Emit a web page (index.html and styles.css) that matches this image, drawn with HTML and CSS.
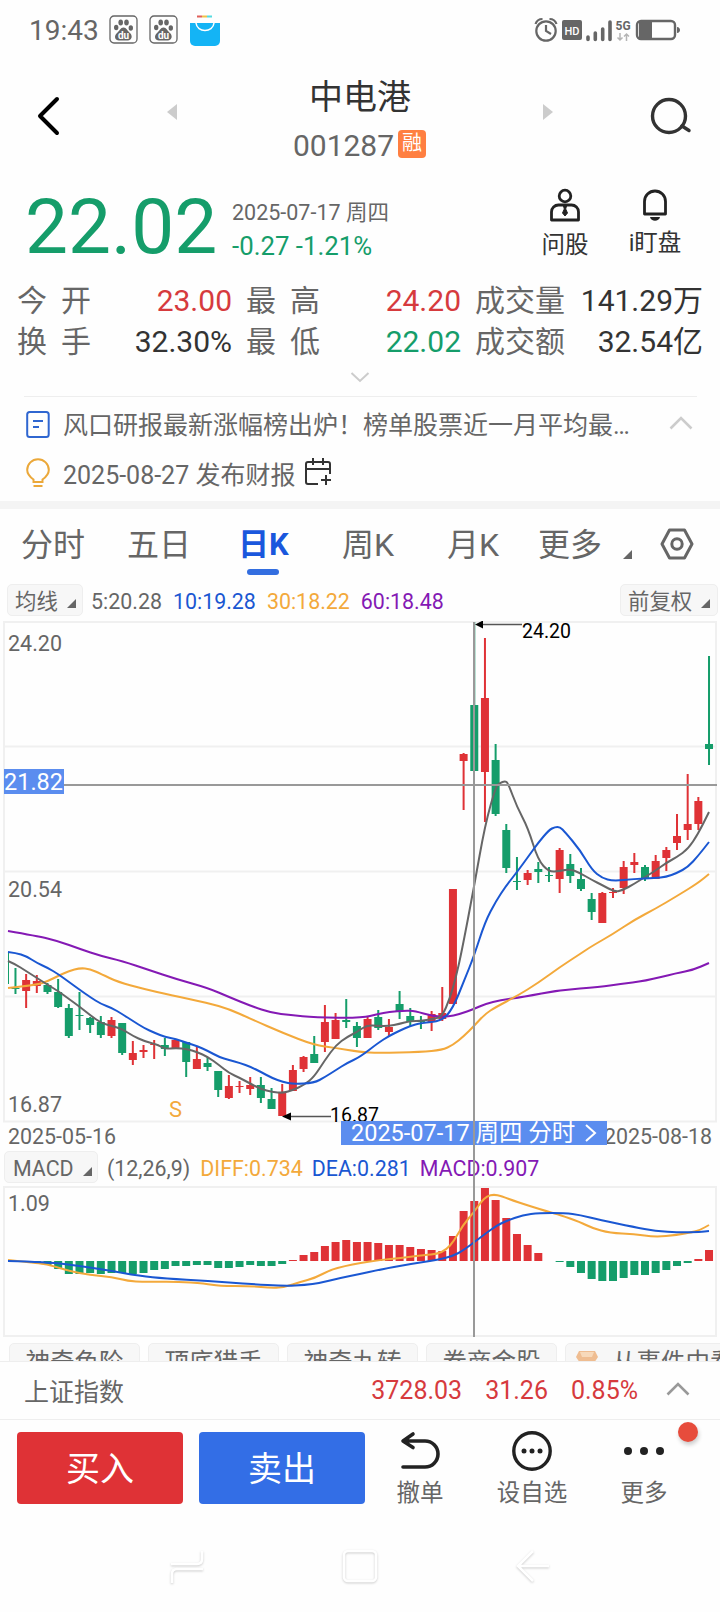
FILE: index.html
```html
<!DOCTYPE html>
<html lang="zh-CN">
<head>
  <meta charset="UTF-8">
  <meta name="viewport" content="width=device-width, initial-scale=1.0">
  <title>中电港 001287</title>
  <link rel="stylesheet" href="styles.css">
</head>
<body>
  <svg class="defs" width="0" height="0">
    <symbol id="paw" viewBox="0 0 30 30">
      <rect x="1" y="1" width="27" height="27" rx="4" fill="none" stroke="#666" stroke-width="1.3"/>
      <ellipse cx="7.2" cy="12.5" rx="2.2" ry="2.8"/>
      <ellipse cx="11.7" cy="7.5" rx="2.3" ry="3"/>
      <ellipse cx="17.5" cy="7.5" rx="2.3" ry="3"/>
      <ellipse cx="21.8" cy="13" rx="2.2" ry="2.8"/>
      <path d="M14.5 12.5c3 0 4 3.500 6.500 5.500 3.500 3.500 1 7.500-2 7.500h-9c-4 0-5.500-4.500-2-7.500 2.500-2 3.500-5.500 6.500-5.500z"/>
      <text x="14.500" y="23.500" text-anchor="middle" class="paw-text">du</text>
    </symbol>
  </svg>

  <div class="status-bar">
    <div class="status-left">
      <span class="clock">19:43</span>
      <svg class="paw-icon" width="30" height="30"><use href="#paw"/></svg>
      <svg class="paw-icon" width="30" height="30"><use href="#paw"/></svg>
      <svg width="32" height="32" viewBox="0 0 32 32">
        <path d="M8 2.500h5" stroke="#e0605a" stroke-width="2"/>
        <path d="M13 2.500h5" stroke="#f0c04a" stroke-width="2"/>
        <path d="M18 2.500h5" stroke="#55dbe0" stroke-width="2"/>
        <path d="M1 9h30v18a5 5 0 0 1-5 5H6a5 5 0 0 1-5-5z" fill="#14b4f5"/>
        <path d="M7 9c1 10 17 10 18 0" fill="none" stroke="#fff" stroke-width="1.500"/>
      </svg>
    </div>
    <svg width="150" height="26" viewBox="532 17 150 26" fill="#666">
      <circle cx="546" cy="31" r="9.700" fill="none" stroke="#666" stroke-width="2.200"/>
      <path d="M546 25v6l5 3M535.500 24c1-3 4-5 7-5M556.500 24c-1-3-4-5-7-5" fill="none" stroke="#666" stroke-width="2.200"/>
      <rect x="562" y="20" width="20" height="20" rx="2"/>
      <text x="572" y="34.500" text-anchor="middle" class="hd">HD</text>
      <path d="M588 37v2.500M595.300 33v6.500M602.700 29v10.500M610 22v17.500" stroke="#666" stroke-width="3.600" stroke-linecap="round"/>
      <text x="615.500" y="30" class="net">5G</text>
      <path d="M620 33v7m-2.500-2.500l2.500 2.500 2.500-2.500M626.500 41v-7m-2.500 2.500l2.500-2.500 2.500 2.500" fill="none" stroke="#b5b5b5" stroke-width="1.500"/>
      <rect x="637" y="21" width="38" height="18" rx="4" fill="none" stroke="#666" stroke-width="2.400"/>
      <path d="M639 22h13v16h-13zM677 27c4 0 4 6 0 6z"/>
    </svg>
  </div>

  <header class="header">
    <svg class="back" width="26" height="44" viewBox="0 0 26 44"><path d="M21 5L4 22l17 17" fill="none" stroke="#000" stroke-width="4" stroke-linecap="round" stroke-linejoin="round"/></svg>
    <svg class="step" width="10" height="16" viewBox="0 0 10 16"><path d="M10 0v16L0 8z" fill="#ccc"/></svg>
    <div class="title">
      <h1>中电港</h1>
      <div class="code">001287<span class="margin-tag">融</span></div>
    </div>
    <svg class="step" width="10" height="16" viewBox="0 0 10 16"><path d="M0 0v16l10-8z" fill="#ccc"/></svg>
    <svg class="search" width="44" height="40" viewBox="0 0 44 40" fill="none" stroke="#333" stroke-width="3.400" stroke-linecap="round"><circle cx="20" cy="19" r="16.500"/><path d="M33 29l7 4.500"/></svg>
  </header>

  <section class="quote">
    <div class="price">22.02</div>
    <div class="change">
      <div class="date">2025-07-17 周四</div>
      <div class="diff">-0.27 -1.21%</div>
    </div>
    <div class="tool ask">
      <svg width="32" height="34" viewBox="0 0 32 34" fill="none" stroke="#222" stroke-width="2.800">
        <circle cx="16" cy="8" r="5.800"/>
        <path d="M2.500 32V24a7 7 0 0 1 7-7h13a7 7 0 0 1 7 7v8z" stroke-linejoin="round"/>
        <path d="M14.500 18h3l-.8 3 1.800 4-2.500 3-2.500-3 1.800-4z" fill="#222" stroke-width="1"/>
      </svg>
      <span>问股</span>
    </div>
    <div class="tool watch">
      <svg width="26" height="34" viewBox="0 0 26 34">
        <path d="M2.500 26V13.500a10.500 10.500 0 0 1 21 0V26z" fill="none" stroke="#222" stroke-width="2.800" stroke-linejoin="round"/>
        <path d="M8 29h10c-1 5-9 5-10 0z" fill="#222"/>
      </svg>
      <span>i盯盘</span>
    </div>
  </section>

  <section class="stats">
    <span class="label wide">今开</span><span class="value up">23.00</span>
    <span class="label wide">最高</span><span class="value up">24.20</span>
    <span class="label">成交量</span><span class="value">141.29万</span>
    <span class="label wide">换手</span><span class="value">32.30%</span>
    <span class="label wide">最低</span><span class="value down">22.02</span>
    <span class="label">成交额</span><span class="value">32.54亿</span>
  </section>
  <div class="expand">
    <svg width="20" height="12" viewBox="0 0 20 12"><path d="M1.500 2L10 10l8.500-8" fill="none" stroke="#ccc" stroke-width="2"/></svg>
  </div>

  <section class="news">
    <div class="news-row">
      <svg class="doc" width="24" height="30" viewBox="0 0 24 30" fill="none" stroke="#2f66d0" stroke-width="2"><rect x="1.200" y="2" width="21.500" height="25" rx="2.500"/><path d="M7 11h10M7 17h6"/></svg>
      <span>风口研报最新涨幅榜出炉！榜单股票近一月平均最…</span>
      <svg class="news-fold" width="24" height="14" viewBox="0 0 24 14"><path d="M1.500 12.500L12 2l10.500 10.500" fill="none" stroke="#ccc" stroke-width="2.600"/></svg>
    </div>
    <div class="news-row">
      <svg width="24" height="30" viewBox="0 0 24 30" fill="none" stroke="#eba83a" stroke-width="2"><path d="M7.500 24v-2.500C4 19 1.200 16.500 1.200 12a10.800 10.800 0 0 1 21.600 0c0 4.500-2.800 7-6.300 9.500V24zM7.500 28h9"/></svg>
      <span>2025-08-27 发布财报</span>
      <svg class="cal" width="28" height="28" viewBox="0 0 28 28" fill="none" stroke="#333" stroke-width="2"><path d="M14 26H4a2 2 0 0 1-2-2V6a2 2 0 0 1 2-2h20a2 2 0 0 1 2 2v10M2 11h24M9 0v7M19 0v7M22 17v10M17 22h10"/></svg>
    </div>
  </section>

  <nav class="tabs">
    <span>分时</span>
    <span>五日</span>
    <span class="active">日K</span>
    <span>周K</span>
    <span>月K</span>
    <span class="more">更多</span>
    <svg class="corner" width="9" height="9" viewBox="0 0 9 9"><path d="M9 0v9H0z" fill="#666"/></svg>
    <svg class="setting" width="34" height="32" viewBox="0 0 34 32" fill="none" stroke="#666" stroke-width="3"><path d="M9.500 2h15L32 16l-7.500 14h-15L2 16z" stroke-linejoin="round"/><circle cx="17" cy="16" r="5.200"/></svg>
  </nav>

  <section class="chart">
    <div class="legend ma-row">
      <span class="picker">均线<svg width="9" height="9" viewBox="0 0 9 9"><path d="M9 0v9H0z" fill="#666"/></svg></span>
      <span class="ma5">5:20.28</span>
      <span class="blue">10:19.28</span>
      <span class="orange">30:18.22</span>
      <span class="purple">60:18.48</span>
      <span class="picker right">前复权<svg width="9" height="9" viewBox="0 0 9 9"><path d="M9 0v9H0z" fill="#666"/></svg></span>
    </div>

    <svg class="k-chart" width="720" height="502" viewBox="0 621 720 502">
      <path class="grid" d="M4 746.500H717M4 871.500H717M4 996.500H717"/>
      <rect class="frame" x="4" y="622" width="712" height="499.500"/>
      <g id="candles"></g>
      <g id="ma-lines"></g>
      <text class="axis" x="8" y="651">24.20</text>
      <text class="axis" x="8" y="897">20.54</text>
      <text class="axis" x="8" y="1112">16.87</text>
      <text class="sell-mark" x="169" y="1117">S</text>
      <path class="pointer" d="M482 624.500h40M290 1116.500h41"/>
      <path d="M475 624.500l8-4v8zM282 1116.500l9-4v8z"/>
      <text class="mark" x="522" y="638">24.20</text>
      <text class="mark" x="330" y="1121.500">16.87</text>
      <path class="cross" d="M64 785H717"/>
      <rect x="4" y="769" width="60" height="25" fill="#5b8def"/>
      <text class="cross-price" x="4" y="790">21.82</text>
    </svg>

    <div class="dates">
      <span>2025-05-16</span>
      <span class="cursor-date">2025-07-17 周四 分时<svg width="14" height="20" viewBox="0 0 14 20"><path d="M2 2l9 8-9 8" fill="none" stroke="#fff" stroke-width="2"/></svg></span>
      <span>2025-08-18</span>
    </div>

    <div class="legend macd-row">
      <span class="picker">MACD<svg width="9" height="9" viewBox="0 0 9 9"><path d="M9 0v9H0z" fill="#666"/></svg></span>
      <span class="params">(12,26,9)</span>
      <span class="orange">DIFF:0.734</span>
      <span class="blue">DEA:0.281</span>
      <span class="purple">MACD:0.907</span>
    </div>

    <svg class="macd-chart" width="720" height="152" viewBox="0 1186 720 152">
      <rect class="frame" x="4" y="1187" width="712" height="149"/>
      <g id="bars"></g>
      <g id="macd-lines"></g>
      <text class="axis" x="8" y="1211">1.09</text>
    </svg>
    <div class="cross-line"></div>
  </section>

  <div class="chips">
    <span>神奇色阶</span>
    <span>顶底猎手</span>
    <span>神奇九转</span>
    <span>券商金股</span>
    <span class="event"><svg width="24" height="20" viewBox="0 0 24 20"><path d="M4 3h16l3 6-4 6H5L1 9z" fill="#efbd91"/><path d="M5 4h14l-2 5H7z" fill="#f7d9ba"/></svg>从事件中看</span>
  </div>

  <div class="index-bar">
    <span class="index-name">上证指数</span>
    <span>3728.03</span>
    <span>31.26</span>
    <span>0.85%</span>
    <svg width="24" height="14" viewBox="0 0 24 14"><path d="M1.500 12.500L12 2l10.500 10.500" fill="none" stroke="#999" stroke-width="2.600"/></svg>
  </div>

  <footer class="actions">
    <button class="buy">买入</button>
    <button class="sell">卖出</button>
    <div class="action undo">
      <svg width="40" height="40" viewBox="0 0 40 40" fill="none" stroke="#222" stroke-width="3.600" stroke-linecap="round" stroke-linejoin="round"><path d="M13 3L3 10l10 6.500M4 10h21a13 13 0 0 1 0 26H3"/></svg>
      <span>撤单</span>
    </div>
    <div class="action fav">
      <svg width="40" height="40" viewBox="0 0 40 40"><circle cx="20" cy="20" r="18.200" fill="none" stroke="#222" stroke-width="3.400"/><g fill="#222"><circle cx="12" cy="20" r="2.500"/><circle cx="20" cy="20" r="2.500"/><circle cx="28" cy="20" r="2.500"/></g></svg>
      <span>设自选</span>
    </div>
    <div class="action other">
      <svg width="40" height="40" viewBox="0 0 40 40" fill="#222"><circle cx="4" cy="20" r="4"/><circle cx="20" cy="20" r="4"/><circle cx="36" cy="20" r="4"/></svg>
      <span>更多</span>
      <i class="red-dot"></i>
    </div>
  </footer>

  <div class="system-nav">
    <svg width="34" height="36" viewBox="0 0 34 36"><path d="M1 16h26q5 0 5-5V3M33 21H7q-5 0-5 5v9"/></svg>
    <svg width="36" height="36" viewBox="0 0 36 36"><rect x="2" y="3" width="32" height="30" rx="4"/></svg>
    <svg width="34" height="36" viewBox="0 0 34 36"><path d="M17 3L2 18l15 15M2 18h31"/></svg>
  </div>

  <script>
    const RED = '#df3236';
    const GREEN = '#159d6a';
    const STEP = 10.67;
    const x = i => 4.800 + i * STEP;

    // colour, high, body top, body bottom, low
    const candles = [
      ['g', 968, 988, 989, 994], ['r', 974, 980, 991, 1008], ['r', 975, 981, 986, 993],
      ['g', 983, 985, 992, 994], ['g', 979, 992, 1007, 1008], ['g', 1004, 1008, 1036, 1038],
      ['g', 992, 1015, 1016, 1030], ['g', 1017, 1018, 1025, 1033], ['g', 1016, 1022, 1035, 1038],
      ['r', 1017, 1020, 1036, 1038], ['g', 1023, 1023, 1053, 1055], ['r', 1041, 1053, 1060, 1065],
      ['r', 1045, 1050, 1052, 1058], ['r', 1040, 1044, 1045, 1059], ['g', 1038, 1045, 1049, 1056],
      ['r', 1039, 1040, 1048, 1049], ['g', 1042, 1042, 1062, 1077], ['r', 1046, 1059, 1069, 1069],
      ['g', 1057, 1063, 1067, 1071], ['g', 1071, 1071, 1090, 1097], ['r', 1075, 1086, 1098, 1099],
      ['r', 1081, 1086, 1087, 1093], ['r', 1077, 1085, 1089, 1095], ['g', 1077, 1085, 1098, 1103],
      ['g', 1088, 1099, 1109, 1109], ['r', 1084, 1092, 1116, 1116], ['r', 1065, 1070, 1091, 1091],
      ['r', 1056, 1057, 1069, 1072], ['g', 1036, 1054, 1063, 1063], ['r', 1005, 1022, 1042, 1052],
      ['r', 1013, 1020, 1039, 1039], ['g', 999, 1020, 1022, 1028], ['g', 1022, 1026, 1038, 1047],
      ['r', 1017, 1019, 1038, 1038], ['g', 1010, 1017, 1028, 1030], ['r', 1019, 1027, 1032, 1036],
      ['g', 991, 1004, 1011, 1019], ['g', 1008, 1016, 1022, 1026], ['g', 1016, 1021, 1022, 1029],
      ['r', 1011, 1014, 1022, 1031], ['r', 987, 1013, 1019, 1021], ['r', 889, 889, 1004, 1004],
      ['r', 753, 754, 761, 810], ['g', 622, 705, 771, 771], ['r', 638, 698, 772, 822],
      ['g', 744, 760, 814, 816], ['g', 824, 830, 868, 873], ['g', 857, 881, 882, 890],
      ['r', 870, 873, 880, 885], ['g', 862, 869, 872, 883], ['g', 867, 875, 876, 882],
      ['r', 848, 850, 879, 893], ['g', 854, 864, 876, 883], ['g', 868, 879, 889, 891],
      ['g', 893, 899, 912, 920], ['r', 892, 893, 923, 923], ['r', 888, 892, 893, 898],
      ['r', 861, 867, 888, 894], ['r', 853, 862, 865, 873], ['g', 865, 867, 879, 881],
      ['r', 855, 861, 879, 879], ['r', 847, 850, 858, 871], ['r', 814, 836, 843, 850],
      ['r', 774, 824, 830, 840], ['r', 797, 801, 824, 830], ['g', 656, 744, 749, 765]
    ];

    // bar heights, positive is above zero
    const macd = [
      1, 0, 0, -1, -4, -8, -13, -13, -12, -13, -12, -12, -13, -12, -9, -8, -5, -5, -4, -4, -7, -7,
      -6, -4, -5, -5, -3, 1, 6, 9, 15, 19, 21, 19, 19, 18, 16, 16, 14, 12, 11, 10, 25, 50,
      60, 73, 61, 43, 27, 16, 8, 0, -1, -6, -12, -18, -20, -20, -17, -14, -14, -12, -9, -5, -2, 2, 11
    ];

    const maLines = {
      '#8419b4': '8,931 37,936 58,941 80,949 101,956 122,961 149,970 176,979 208,988 229,997 251,1006 272,1013 290,1015 315,1017.5 362,1018 378,1014 389,1012 405,1010.5 415,1011 432,1016 447,1017 460,1014 474,1009 485,1004 501,1000 523,997 560,990 600,987 620,984 645,981 677,973 693,970 709,963',
      '#f3a93b': '8,988 37,985 48,981 58,976 69,971 80,968 90,969 101,974 118,982 144,989 170,995 208,1003 229,1009 251,1019 283,1033 314,1045 336,1048 360,1052 378,1053 421,1052 442,1050 453,1045 464,1036 474,1026 485,1014 496,1007 517,996 538,983 560,967 580,954 592,946 613,934 634,920 655,909 677,896 698,883 709,874',
      '#666': '8,961 15,964 26,971 37,978 48,985 58,991 69,999 80,1007 90,1015 101,1023 112,1026 122,1029 133,1036 144,1041 155,1044 160,1046 165,1049 176,1048 187,1049 197,1052 208,1057 219,1065 229,1073 240,1078 251,1084 261,1089 272,1092 283,1093 293,1090 304,1085 314,1077 325,1060 336,1045 347,1037 357,1032 367,1025 378,1026 389,1026 399,1024 410,1021 421,1021 432,1019 442,1017 450,998 456,977 462,950 474,887 485,825 496,786 500,783 505,781 508,783 517,807 528,828 538,860 549,872 560,871 570,869 580,873 592,880 602,885 615,892 623,890 634,884 645,877 655,871 666,863 677,857 688,849 698,834 709,812',
      '#1a57d2': '8,952 16,953 26,956 37,963 48,968 58,974 69,982 80,990 90,997 101,1004 112,1008 122,1014 133,1021 144,1028 155,1033 165,1037 176,1039 187,1043 197,1046 208,1051 219,1057 229,1060 240,1063 251,1067 261,1072 272,1078 283,1082 293,1084 314,1083 325,1077 336,1070 347,1063 360,1057 378,1043 389,1036 399,1031 410,1026 421,1023 442,1021 453,1008 464,981 474,956 485,922 496,901 506,886 517,872 528,857 538,843 549,830 555,827 560,827 565,832 580,850 592,870 602,878 613,881 634,879 655,878 666,877 677,873 688,867 698,856 709,842'
    };

    const macdLines = {
      '#f3a93b': '8,1260 37,1263 50,1265 69,1271 90,1275 112,1277 128,1281 144,1282 176,1281.5 205,1283.5 219,1286 250,1286 272,1288 285,1287 300,1282 315,1278 330,1270 345,1266 360,1263 380,1260 400,1258 425,1255 437,1254 446,1250 454,1241 463,1225 474,1212 481,1202 487,1196 494,1194.5 501,1196 517,1202 549,1212 560,1215 580,1222 592,1228 610,1233 634,1234 655,1237 677,1235 693,1232 700,1230 709,1225',
      '#1a57d2': '8,1261 48,1262 80,1266 106,1270 140,1276 165,1278.5 208,1281 250,1284 285,1286 305,1285 320,1283 340,1278 360,1274 378,1270 410,1264 437,1260 453,1256 464,1250 485,1234 496,1226 506,1221 523,1215 539,1213 565,1213 580,1215 600,1220 634,1227 655,1231 680,1232.5 700,1232 709,1231'
    };

    // Round the corners by curving through the midpoints
    function smooth(str) {
      const p = str.split(' ').map(s => s.split(',').map(Number));
      let d = `M${p[0]}`;
      for (let i = 1; i < p.length - 1; i++) {
        d += `Q${p[i]} ${(p[i][0] + p[i + 1][0]) / 2},${(p[i][1] + p[i + 1][1]) / 2}`;
      }
      return d + `L${p[p.length - 1]}`;
    }

    function drawLines(id, lines) {
      document.getElementById(id).innerHTML = Object.keys(lines)
        .map(c => `<path class="line" d="${smooth(lines[c])}" stroke="${c}"/>`).join('');
    }

    let html = `<rect x="8" y="953" width="1" height="31" fill="${GREEN}"/>`;
    candles.forEach(([c, high, top, bottom, low], n) => {
      const color = c === 'r' ? RED : GREEN;
      const cx = x(n + 1);
      html += `<rect x="${cx - 1}" y="${high}" width="2" height="${low - high}" fill="${color}"/>`;
      html += `<rect x="${cx - 4}" y="${top}" width="8" height="${bottom - top}" fill="${color}"/>`;
    });
    document.getElementById('candles').innerHTML = html;

    document.getElementById('bars').innerHTML = macd.map((v, i) => {
      const left = Math.max(8, x(i) - 4);
      return `<rect x="${left}" y="${v > 0 ? 1261 - v : 1261}" width="${x(i) + 4 - left}" height="${Math.abs(v)}" fill="${v > 0 ? RED : GREEN}"/>`;
    }).join('');

    drawLines('ma-lines', maLines);
    drawLines('macd-lines', macdLines);
  </script>
</body>
</html>
```

FILE: styles.css
```css
* {
  box-sizing: border-box;
}
body {
  margin: 0;
  width: 720px;
  height: 1612px;
  overflow: hidden;
  background: #fefefe;
  color: #666;
  font-family: Roboto, "Noto Sans CJK SC", sans-serif;
}
svg {
  display: block;
  flex-shrink: 0;
}
.defs {
  position: absolute;
}

/* status bar */
.status-bar {
  height: 60px;
  padding: 0 38px 0 29px;
  display: flex;
  align-items: center;
  justify-content: space-between;
}
.status-left {
  display: flex;
  align-items: center;
}
.clock {
  width: 80px;
  font-size: 28px;
  line-height: 60px;
  padding-top: 2px;
}
.paw-icon {
  margin-right: 10px;
  fill: #666;
}
.paw-text {
  font-size: 10px;
  font-weight: bold;
  fill: #fff;
}
.hd {
  font-size: 11px;
  font-weight: 500;
  fill: #fff;
}
.net {
  font-size: 12px;
  font-weight: bold;
}

/* header */
.header {
  height: 115px;
  display: flex;
  padding: 0 27px 0 36px;
  align-items: flex-start;
}
.back {
  margin-top: 34px;
}
.step {
  margin-top: 44px;
}
.header .back + .step {
  margin-left: 105px;
}
.title {
  width: 366px;
  text-align: center;
}
.title h1 {
  margin: 14px 0 0;
  font-size: 34px;
  line-height: 46px;
  font-weight: 400;
  color: #333;
}
.code {
  height: 50px;
  display: flex;
  align-items: center;
  justify-content: center;
  font-size: 30px;
  padding-right: 1px;
}
.margin-tag {
  width: 28px;
  height: 28px;
  margin: -2px 0 0 4px;
  border-radius: 4px;
  background: #ff7f41;
  color: #fff;
  font-size: 20px;
  line-height: 27px;
}
.search {
  margin: 37px 0 0 auto;
}

/* quote */
.quote {
  height: 103px;
  display: flex;
  padding-left: 25px;
}
.price {
  width: 207px;
  font-size: 76.500px;
  line-height: 105px;
  color: #159d6a;
}
.change {
  width: 300px;
  padding-top: 22px;
}
.date {
  font-size: 21.500px;
  line-height: 32px;
}
.diff {
  font-size: 25.800px;
  line-height: 34px;
  color: #159d6a;
}
.tool {
  display: flex;
  flex-direction: column;
  align-items: center;
  padding-top: 13px;
  font-size: 23.500px;
  line-height: 34px;
  color: #333;
}
.tool span {
  margin-top: 6px;
  white-space: nowrap;
}
.ask {
  width: 66px;
}
.watch {
  width: 114px;
}
.watch span {
  margin-top: 4px;
}

/* stats */
.stats {
  display: grid;
  grid-template-columns: 74px 141px 74px 155px 92px 1fr;
  row-gap: 1px;
  padding: 3px 17px 0 17px;
  font-size: 30px;
  line-height: 40px;
}
.value {
  text-align: right;
  color: #333;
  white-space: nowrap;
}
.stats .wide {
  text-align-last: justify;
}
.stats .label:nth-child(6n + 3),
.stats .label:nth-child(6n + 5) {
  margin-left: 14px;
  margin-right: -14px;
}
.up {
  color: #d63a3d;
}
.stats .down {
  color: #159d6a;
}
.stats .up {
  color: #d63a3d;
}
.expand {
  height: 34px;
  display: flex;
  justify-content: center;
  padding-top: 9px;
}

/* news */
.news {
  margin: 0 0 0 24px;
  height: 105px;
}
.news::before {
  content: "";
  display: block;
  width: 673px;
  height: 1px;
  background: #eee;
}
.news-row {
  height: 48px;
  display: flex;
  align-items: center;
  padding-left: 2px;
  font-size: 25px;
  white-space: nowrap;
}
.news-row span {
  margin-left: 13px;
}
.news-row:first-of-type {
  height: 52px;
}
.doc {
  margin-top: 3px;
}
.news-fold {
  margin: 0 27px 0 auto;
}
.cal {
  margin-left: 9px;
  margin-top: -3px;
}

/* tabs */
.tabs {
  border-top: 8px solid #f4f4f4;
  height: 80px;
  display: grid;
  grid-template-columns: 106px 114px 101px 105px 91px 85px 37px 1fr;
  padding-left: 21px;
  font-size: 32px;
  line-height: 72px;
}
.active {
  color: #1a57dd;
  font-size: 31px;
  font-weight: bold;
  text-indent: -3px;
}
.active::after {
  content: "";
  display: block;
  width: 32px;
  height: 6px;
  margin: -12px 0 0 6px;
  border-radius: 3px;
  background: #336ee0;
}
.corner {
  margin-top: 41px;
}
.setting {
  margin-top: 19px;
}

/* chart */
.chart {
  position: relative;
  height: 757px;
}
.legend {
  display: flex;
  align-items: center;
  font-size: 21.400px;
  height: 40px;
  white-space: nowrap;
}
.picker {
  height: 32px;
  display: flex;
  align-items: center;
  border: 1px solid #eee;
  border-radius: 5px;
  background: #f7f7f7;
}
.picker svg {
  margin: 8px 0 0 9px;
}
.ma-row {
  padding: 0 2px 0 7px;
}
.ma-row .picker {
  width: 76px;
  padding-left: 7px;
  margin: -3px 8px 0 0;
}
.ma-row .picker.right {
  width: 98px;
  margin: -3px 0 0 auto;
}
.ma5, .ma-row .blue, .ma-row .orange {
  margin-right: 11px;
}
.blue {
  color: #1a57d2;
}
.orange {
  color: #f3a93b;
}
.purple {
  color: #8419b4;
}
.frame, .grid {
  fill: none;
  stroke: #f0f0f0;
  stroke-width: 2;
}
.line {
  fill: none;
  stroke-width: 2;
}
.axis {
  font-size: 21.500px;
  fill: #666;
}
.sell-mark {
  font-size: 22px;
  fill: #f3a93b;
}
.mark {
  font-size: 19.500px;
}
.pointer {
  stroke: #555;
  stroke-width: 1.500;
}
.cross {
  stroke: #999;
  stroke-width: 2;
}
.cross-price {
  font-size: 23.500px;
  fill: #fff;
}
.dates {
  height: 26px;
  margin-top: -2px;
  display: flex;
  justify-content: space-between;
  padding: 0 8px;
  font-size: 21.400px;
  line-height: 32px;
  position: relative;
}
.cursor-date {
  position: absolute;
  left: 341px;
  top: 0;
  width: 266px;
  height: 24px;
  padding-left: 10px;
  display: flex;
  align-items: center;
  background: #5b8def;
  color: #fff;
  font-size: 23.500px;
  line-height: 24px;
  white-space: nowrap;
}
.cursor-date svg {
  margin-left: 9px;
}
.macd-row {
  padding: 3px 0 0 4px;
}
.macd-row .picker {
  width: 94px;
  height: 32px;
  padding: 2px 0 0 8px;
  margin: -3px 9px 0 0;
}
.macd-row .picker svg {
  margin: 6px 0 0 9px;
}
.macd-row .params {
  margin-right: 10px;
}
.macd-row .orange, .macd-row .blue {
  margin-right: 9px;
}
.macd-chart {
  margin-top: -1px;
}
.cross-line {
  position: absolute;
  left: 473px;
  top: 41px;
  width: 2px;
  height: 715px;
  background: #999;
}

/* chips */
.chips {
  height: 18px;
  overflow: hidden;
  display: flex;
  gap: 8px;
  padding-left: 9px;
  margin-top: 5px;
}
.chips span {
  flex: none;
  width: 131px;
  height: 38px;
  border: 1px solid #eee;
  border-radius: 5px;
  background: #f7f7f7;
  font-size: 24.500px;
  line-height: 37px;
  text-align: center;
}
.chips .event {
  width: 175px;
  display: flex;
  padding-left: 9px;
  white-space: nowrap;
}
.event svg {
  margin: 4px 13px 0 0;
}

/* index */
.index-bar {
  height: 59px;
  border-top: 1px solid #eee;
  border-bottom: 1px solid #eee;
  display: flex;
  align-items: center;
  gap: 23px;
  padding: 0 30px 0 24px;
  font-size: 25px;
  color: #d63a3d;
}
.index-name {
  margin: -2px auto 0 0;
  color: #666;
}
.index-bar svg {
  margin: -4px 0 0 5px;
}

/* actions */
.actions {
  height: 111px;
  display: flex;
  padding: 12px 0 0 17px;
}
.actions button {
  width: 166px;
  height: 72px;
  margin-right: 16px;
  padding: 0 0 3px;
  border: none;
  border-radius: 4px;
  color: #fff;
  font-family: inherit;
  font-size: 34px;
}
.buy {
  background: #df3236;
}
.sell {
  background: #336ee6;
}
.action {
  position: relative;
  display: flex;
  flex-direction: column;
  align-items: center;
  font-size: 23.500px;
  line-height: 34px;
  margin-top: -1px;
  white-space: nowrap;
}
.action span {
  margin-top: 5px;
}
.undo {
  width: 78px;
}
.fav {
  width: 146px;
}
.other {
  width: 78px;
}
.red-dot {
  position: absolute;
  left: 73px;
  top: -9px;
  width: 20px;
  height: 20px;
  border-radius: 50%;
  background: #e74c3c;
  box-shadow: 1px 3px 4px rgba(0, 0, 0, 0.2);
}

/* system nav */
.system-nav {
  display: flex;
  justify-content: space-between;
  padding: 17px 170px 0;
}
.system-nav svg {
  fill: none;
  stroke: #fff;
  stroke-width: 2.500;
  filter: drop-shadow(0 1px 1px rgba(0, 0, 0, 0.2));
}
```
